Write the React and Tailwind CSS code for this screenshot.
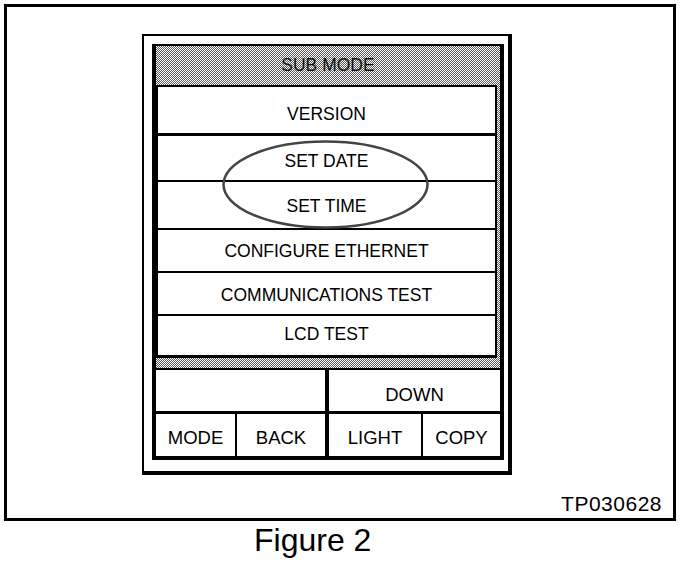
import React from 'react';

const hatch =
    'bg-[image:repeating-conic-gradient(#5a5a5a_0_25%,#ffffff_0_50%)] bg-[length:2px_2px]';

const rows = [
    { label: 'VERSION', cls: 'h-[49px] pt-[8px] border-b-[3px]' },
    { label: 'SET DATE', cls: 'h-[46px] pt-[6px] border-b-2' },
    { label: 'SET TIME', cls: 'h-[48px] pt-[2px] border-b-2' },
    { label: 'CONFIGURE ETHERNET', cls: 'h-[43px] border-b-2' },
    { label: 'COMMUNICATIONS TEST', cls: 'h-[43px] pt-[3px] border-b-2' },
    { label: 'LCD TEST', cls: 'h-[42px] pb-[4px] border-b-[3px]' },
];

export default function App() {
    return (
        <div className="w-[688px] h-[568px] bg-white text-black font-['Liberation_Sans',Arial,sans-serif]">
            {/* outer figure frame */}
            <div className="ml-[4px] pt-[4px]">
                <div className="flex flex-col w-[672px] h-[517px] border-[3px] border-black">
                    {/* device */}
                    <div className="ml-[135px] mt-[27px] w-[370px] h-[441px] border-black border-t-2 border-l-2 border-r-4 border-b-4 pl-[8px] pt-[8px] pr-[4px] pb-[11px]">
                        <div className={`relative h-full border-black border-l-4 border-r-4 border-t-2 border-b-4 flex flex-col ${hatch}`}>
                            {/* header */}
                            <div className="h-[39px] shrink-0 flex items-center justify-center text-[17.5px] text-[#111] leading-none">
                                SUB MODE
                            </div>

                            {/* menu rows */}
                            <div className="shrink-0 mr-[3px] bg-white border-black border-t-2 border-l-2 border-r-2">
                                {rows.map((r) => (
                                    <div
                                        key={r.label}
                                        className={`flex items-center justify-center border-black text-[17.5px] leading-[20px] ${r.cls}`}
                                    >
                                        {r.label}
                                    </div>
                                ))}
                            </div>

                            {/* hatch strip */}
                            <div className="h-[10px] shrink-0" />

                            {/* keys */}
                            <div className="bg-white border-t-2 border-black text-[18.5px] leading-[22px] flex-1 flex flex-col">
                                <div className="flex h-[44px] shrink-0 border-b-[3px] border-black">
                                    <div className="w-[169px] border-r-4 border-black box-content" />
                                    <div className="flex-1 flex items-center justify-center pt-[8px]">DOWN</div>
                                </div>
                                <div className="flex flex-1">
                                    <div className="w-[79px] border-r-2 border-black box-content flex items-center justify-center pt-[5px]">MODE</div>
                                    <div className="w-[88px] border-r-4 border-black box-content flex items-center justify-center pt-[5px]">BACK</div>
                                    <div className="w-[92px] border-r-2 border-black box-content flex items-center justify-center pt-[5px]">LIGHT</div>
                                    <div className="flex-1 flex items-center justify-center pt-[5px]">COPY</div>
                                </div>
                            </div>

                            {/* highlight ring */}
                            <svg
                                className="absolute left-[66px] top-[94px]"
                                width="207"
                                height="89"
                                viewBox="0 0 207 89"
                            >
                                <ellipse cx="103.5" cy="44.5" rx="102" ry="43" fill="none" stroke="#444" strokeWidth="2.5" />
                            </svg>
                        </div>
                    </div>

                    <div className="self-end mr-[11px] mt-[17px] text-[21px] leading-[24px] tracking-[0.5px]">
                        TP030628
                    </div>
                </div>
            </div>

            <div className="ml-[254px] mt-[1px] text-[32px] leading-[36px]">Figure 2</div>
        </div>
    );
}
